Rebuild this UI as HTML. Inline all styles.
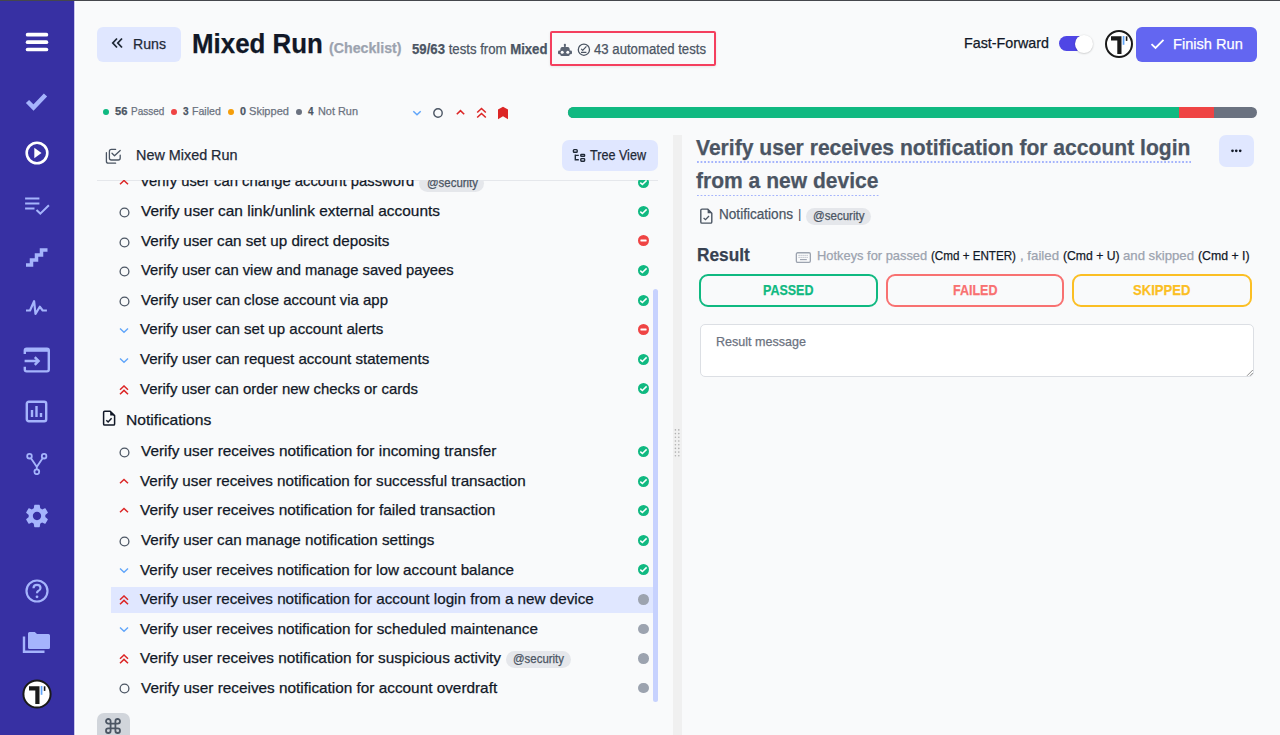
<!DOCTYPE html>
<html><head><meta charset="utf-8"><style>
html,body{margin:0;padding:0;}
body{width:1280px;height:735px;overflow:hidden;background:#f9fafb;position:relative;font-family:"Liberation Sans",sans-serif;}
.t{position:absolute;white-space:nowrap;transform-origin:0 0;-webkit-text-stroke:0.25px currentColor;}
</style></head><body>
<div style="position:absolute;left:0px;top:0.00px;width:74.00px;height:735.00px;background:#3730a3"></div>
<div style="position:absolute;left:74px;top:0.00px;width:1.00px;height:735.00px;background:#c9c6ea"></div>
<div style="position:absolute;left:75px;top:0.00px;width:1.30px;height:735.00px;background:#ffffff"></div>
<svg style="position:absolute;left:23.5px;top:31.50px;" width="26" height="20" viewBox="0 0 26 20"><rect x="1.75" y="0.85" width="22.5" height="3.7" rx="1.85" fill="#fff"/><rect x="1.75" y="8.3" width="22.5" height="3.7" rx="1.85" fill="#fff"/><rect x="1.75" y="15.65" width="22.5" height="3.7" rx="1.85" fill="#fff"/></svg>
<svg style="position:absolute;left:24.5px;top:92.20px;" width="24" height="19" viewBox="0 0 24 19"><path d="M2.5 9.5 L8.5 15.5 L20.5 3" fill="none" stroke="#a5b4fc" stroke-width="4.5"/></svg>
<svg style="position:absolute;left:24.5px;top:141.00px;" width="24" height="24" viewBox="0 0 24 24"><circle cx="12" cy="12" r="10.3" fill="none" stroke="#fff" stroke-width="2.6"/><path d="M9.3 6.8 L16.5 12 L9.3 17.2 Z" fill="#fff"/></svg>
<svg style="position:absolute;left:23.5px;top:195.50px;" width="26" height="19" viewBox="0 0 26 19"><path d="M1.1 2.5 H15.4 M1.1 7.4 H15.4 M1.1 12.5 H10.5" stroke="#a5b4fc" stroke-width="2"/><path d="M12.5 14 L16.3 17.6 L24.9 9.3" fill="none" stroke="#a5b4fc" stroke-width="2"/></svg>
<svg style="position:absolute;left:24.5px;top:247.00px;" width="24" height="20" viewBox="0 0 24 20"><path d="M1 18 H6.5 V13 H11.5 V8 H16.5 V3 H22.5" fill="none" stroke="#a5b4fc" stroke-width="3.5"/></svg>
<svg style="position:absolute;left:25.0px;top:300.00px;" width="23" height="16" viewBox="0 0 23 16"><path d="M1 10.5 H5 L9.1 1.2 L10.5 14 L14.8 6.7 L17.7 10.5 H21.9" fill="none" stroke="#a5b4fc" stroke-width="2.2" stroke-linejoin="round"/></svg>
<svg style="position:absolute;left:23.0px;top:347.00px;" width="27" height="26" viewBox="0 0 27 26"><path d="M1.8 7 V3.6 Q1.8 1.8 3.6 1.8 H24 Q25.8 1.8 25.8 3.6 V22.6 Q25.8 24.4 24 24.4 H3.6 Q1.8 24.4 1.8 22.6 V19.7" fill="none" stroke="#a5b4fc" stroke-width="2.4"/><rect x="1.8" y="1.8" width="24" height="3" fill="#a5b4fc"/><path d="M1.6 14 H15.5 M11.8 10.2 L15.6 14 L11.8 17.8" fill="none" stroke="#a5b4fc" stroke-width="2.4"/></svg>
<svg style="position:absolute;left:25.0px;top:400.00px;" width="23" height="23" viewBox="0 0 23 23"><rect x="1.8" y="1.8" width="19.4" height="19.4" rx="2" fill="none" stroke="#a5b4fc" stroke-width="2.4"/><path d="M7 17 V10 M11.5 17 V6 M16 17 V13" stroke="#a5b4fc" stroke-width="2.4"/></svg>
<svg style="position:absolute;left:25.5px;top:451.50px;" width="22" height="23" viewBox="0 0 22 23"><circle cx="3.5" cy="4.2" r="2.3" fill="none" stroke="#a5b4fc" stroke-width="1.8"/><circle cx="18.1" cy="4.2" r="2.3" fill="none" stroke="#a5b4fc" stroke-width="1.8"/><circle cx="10.8" cy="19.8" r="2.4" fill="none" stroke="#a5b4fc" stroke-width="1.8"/><path d="M4.8 6 L10.8 14.8 L16.8 6 M10.8 14.8 V17.4" fill="none" stroke="#a5b4fc" stroke-width="1.8"/></svg>
<svg style="position:absolute;left:22.5px;top:501.50px;" width="28" height="28" viewBox="0 0 28 28"><g transform="translate(0.08,0.08) scale(1.16)"><path d="M19.14 12.94c.04-.3.06-.61.06-.94 0-.32-.02-.64-.07-.94l2.03-1.58c.18-.14.23-.41.12-.61l-1.92-3.32c-.12-.22-.37-.29-.59-.22l-2.39.96c-.5-.38-1.03-.7-1.62-.94l-.36-2.54c-.04-.24-.24-.41-.48-.41h-3.84c-.24 0-.43.17-.47.41l-.36 2.54c-.59.24-1.13.57-1.62.94l-2.39-.96c-.22-.08-.47 0-.59.22L2.74 8.87c-.12.21-.08.47.12.61l2.03 1.58c-.05.3-.09.63-.09.94s.02.64.07.94l-2.03 1.58c-.18.14-.23.41-.12.61l1.92 3.32c.12.22.37.29.59.22l2.39-.96c.5.38 1.03.7 1.62.94l.36 2.54c.05.24.24.41.48.41h3.84c.24 0 .44-.17.47-.41l.36-2.54c.59-.24 1.130-.56 1.62-.94l2.39.96c.22.08.47 0 .59-.22l1.92-3.32c.12-.22.07-.47-.12-.61l-2.01-1.58zM12 15.6c-1.98 0-3.6-1.62-3.6-3.6s1.62-3.6 3.6-3.6 3.6 1.62 3.6 3.6-1.62 3.6-3.6 3.6z" fill="#a5b4fc"/></g></svg>
<svg style="position:absolute;left:24.5px;top:578.50px;" width="24" height="24" viewBox="0 0 24 24"><circle cx="12" cy="12" r="10.5" fill="none" stroke="#a5b4fc" stroke-width="2.2"/><path d="M8.5 9.2 Q8.5 5.8 12 5.8 Q15.5 5.8 15.5 9 Q15.5 11 13.2 12 Q12 12.6 12 14.3" fill="none" stroke="#a5b4fc" stroke-width="2.2"/><circle cx="12" cy="17.8" r="1.4" fill="#a5b4fc"/></svg>
<svg style="position:absolute;left:21.5px;top:631.00px;" width="30" height="23" viewBox="0 0 30 23"><path d="M2 5.5 V20.8 H22.5" fill="none" stroke="#a5b4fc" stroke-width="2.4"/><path d="M7.5 1 H12.8 L15 3 H26.5 Q28 3 28 4.5 V16.5 Q28 18 26.5 18 H7.5 Q6 18 6 16.5 V2.5 Q6 1 7.5 1 Z" fill="#a5b4fc"/></svg>
<svg style="position:absolute;left:21.200000000000003px;top:677.90px;" width="32" height="32" viewBox="0 0 32 32"><circle cx="16" cy="16" r="13.6" fill="#fff" stroke="#1a1a1a" stroke-width="2"/><path d="M8 8.2 H18.5 V25.9 H14.3 V12.5 H8 Z" fill="#1a1a1a"/><rect x="19.7" y="8" width="1.7" height="8.8" fill="#60a5fa"/><rect x="22.8" y="8.3" width="1.6" height="4.6" fill="#1a1a1a"/></svg>
<div style="position:absolute;left:97px;top:27.00px;width:84.00px;height:35.00px;background:#e0e7ff;border-radius:6px"></div>
<svg style="position:absolute;left:111px;top:37.00px;" width="13" height="12" viewBox="0 0 13 12"><path d="M6 1.5 L1.8 6 L6 10.5 M11 1.5 L6.8 6 L11 10.5" fill="none" stroke="#1f2937" stroke-width="1.8"/></svg>
<div class="t" style="left:133.3px;top:35.70px;font-size:15px;line-height:15px;font-weight:400;color:#1f2937;transform:scaleX(0.9420);">Runs</div>
<div class="t" style="left:192.2px;top:30.02px;font-size:27.5px;line-height:27.5px;font-weight:700;color:#111827;transform:scaleX(0.9408);">Mixed Run</div>
<div class="t" style="left:329.4px;top:39.90px;font-size:15px;line-height:15px;font-weight:700;color:#9ca3af;transform:scaleX(0.9454);">(Checklist)</div>
<div class="t" style="left:412.3px;top:41.75px;font-size:14px;line-height:14px;font-weight:400;color:#4b5563;transform:scaleX(0.9412);"><b>59/63</b> tests from <b>Mixed</b></div>
<div style="position:absolute;left:550px;top:31.00px;width:166.00px;height:34.50px;border:2.5px solid #f43f5e;border-radius:2px;box-sizing:border-box;box-shadow:0 1px 3px rgba(0,0,0,0.08)"></div>
<svg style="position:absolute;left:557px;top:43.00px;" width="16" height="14" viewBox="0 0 16 14"><rect x="6.9" y="0.7" width="2" height="3.4" rx="0.8" fill="#5b6473"/><path d="M5.2 3.9 H10.8 Q12.8 3.9 12.8 8 V11.6 Q12.8 12.9 11.5 12.9 H4.5 Q3.2 12.9 3.2 11.6 V8 Q3.2 3.9 5.2 3.9 Z" fill="#5b6473"/><rect x="1" y="7.6" width="3.2" height="3.6" rx="1.2" fill="#5b6473"/><rect x="11.8" y="7.6" width="3.2" height="3.6" rx="1.2" fill="#5b6473"/><circle cx="5.2" cy="9.2" r="1.5" fill="#fff"/><circle cx="10.8" cy="9.2" r="1.5" fill="#fff"/></svg>
<svg style="position:absolute;left:576.5px;top:43.00px;" width="14" height="14" viewBox="0 0 14 14"><circle cx="6.9" cy="6.7" r="5.6" fill="none" stroke="#4b5563" stroke-width="1.3"/><path d="M4.2 5.8 L5.7 7.4 L9.4 3.4 M4 9.3 H9.4" fill="none" stroke="#4b5563" stroke-width="1.2"/></svg>
<div class="t" style="left:594.0px;top:41.75px;font-size:14px;line-height:14px;font-weight:400;color:#4b5563;transform:scaleX(0.9406);">43 automated tests</div>
<div class="t" style="left:964.0px;top:35.00px;font-size:15px;line-height:15px;font-weight:400;color:#111827;transform:scaleX(0.9530);">Fast-Forward</div>
<div style="position:absolute;left:1058.7px;top:36.30px;width:27.30px;height:14.80px;background:#4f46e5;border-radius:8px"></div>
<div style="position:absolute;left:1075.3px;top:35.30px;width:17.80px;height:17.80px;background:#fff;border-radius:50%;box-shadow:0 0.5px 2px rgba(0,0,0,0.25)"></div>
<svg style="position:absolute;left:1103px;top:28.00px;" width="32" height="32" viewBox="0 0 32 32"><circle cx="16" cy="16" r="13" fill="#fff" stroke="#1a1a1a" stroke-width="2"/><path d="M8 8.2 H18.5 V25.9 H14.3 V12.5 H8 Z" fill="#1a1a1a"/><rect x="19.7" y="8" width="1.7" height="8.8" fill="#60a5fa"/><rect x="22.8" y="8.3" width="1.6" height="4.6" fill="#1a1a1a"/></svg>
<div style="position:absolute;left:1136px;top:27.00px;width:121.00px;height:35.00px;background:#6366f1;border-radius:6px"></div>
<svg style="position:absolute;left:1150px;top:38.00px;" width="15" height="12" viewBox="0 0 15 12"><path d="M1.5 6.2 L5.5 10 L13.5 1.8" fill="none" stroke="#fff" stroke-width="1.8"/></svg>
<div class="t" style="left:1172.7px;top:35.68px;font-size:15.5px;line-height:15.5px;font-weight:400;color:#ffffff;transform:scaleX(0.9420);">Finish Run</div>
<div style="position:absolute;left:103.1px;top:109.10px;width:5.80px;height:5.80px;background:#10b981;border-radius:50%"></div>
<div style="position:absolute;left:171.1px;top:109.10px;width:5.80px;height:5.80px;background:#ef4444;border-radius:50%"></div>
<div style="position:absolute;left:228.1px;top:109.10px;width:5.80px;height:5.80px;background:#f59e0b;border-radius:50%"></div>
<div style="position:absolute;left:295.90000000000003px;top:109.10px;width:5.80px;height:5.80px;background:#6b7280;border-radius:50%"></div>
<div class="t" style="left:115.0px;top:106.47px;font-size:11.5px;line-height:11.5px;font-weight:700;color:#4b5563;transform:scaleX(0.9690);">56</div>
<div class="t" style="left:130.7px;top:106.47px;font-size:11.5px;line-height:11.5px;font-weight:400;color:#6b7280;transform:scaleX(0.8681);">Passed</div>
<div class="t" style="left:183.0px;top:106.47px;font-size:11.5px;line-height:11.5px;font-weight:700;color:#4b5563;transform:scaleX(0.8741);">3</div>
<div class="t" style="left:192.0px;top:106.47px;font-size:11.5px;line-height:11.5px;font-weight:400;color:#6b7280;transform:scaleX(0.9193);">Failed</div>
<div class="t" style="left:240.0px;top:106.47px;font-size:11.5px;line-height:11.5px;font-weight:700;color:#4b5563;transform:scaleX(0.9366);">0</div>
<div class="t" style="left:249.0px;top:106.47px;font-size:11.5px;line-height:11.5px;font-weight:400;color:#6b7280;transform:scaleX(0.9624);">Skipped</div>
<div class="t" style="left:308.3px;top:106.47px;font-size:11.5px;line-height:11.5px;font-weight:700;color:#4b5563;transform:scaleX(0.8585);">4</div>
<div class="t" style="left:317.5px;top:106.47px;font-size:11.5px;line-height:11.5px;font-weight:400;color:#6b7280;transform:scaleX(0.9481);">Not Run</div>
<svg style="position:absolute;left:411px;top:108.00px;" width="12" height="9" viewBox="0 0 12 9"><path d="M2.3 3.2 L6 6.8 L9.7 3.2" fill="none" stroke="#60a5fa" stroke-width="1.5"/></svg>
<svg style="position:absolute;left:432px;top:107.40px;" width="12" height="12" viewBox="0 0 12 12"><circle cx="6" cy="6" r="4.2" fill="none" stroke="#4b5563" stroke-width="1.4"/></svg>
<svg style="position:absolute;left:454.5px;top:108.00px;" width="11" height="9" viewBox="0 0 11 9"><path d="M1.8 6.3 L5.5 2.7 L9.2 6.3" fill="none" stroke="#dc2626" stroke-width="1.6"/></svg>
<svg style="position:absolute;left:476px;top:106.50px;" width="11" height="12" viewBox="0 0 11 12"><path d="M1.2 5.5 L5.5 1.5 L9.8 5.5 M1.2 10.5 L5.5 6.5 L9.8 10.5" fill="none" stroke="#dc2626" stroke-width="1.6"/></svg>
<svg style="position:absolute;left:496.5px;top:106.00px;" width="12" height="14" viewBox="0 0 12 14"><path d="M1 3.5 L6 0.8 L11 3.5 L11 13.2 L6 10.2 L1 13.2 Z" fill="#dc2626"/></svg>
<div style="position:absolute;left:568px;top:107.00px;width:689.00px;height:11.00px;background:#6b7280;border-radius:6px;overflow:hidden"></div>
<div style="position:absolute;left:568px;top:107.00px;width:611.00px;height:11.00px;background:#10b981;border-radius:6px 0 0 6px"></div>
<div style="position:absolute;left:1179px;top:107.00px;width:35.00px;height:11.00px;background:#ef4444"></div>
<svg style="position:absolute;left:100px;top:143.00px;" width="26" height="26" viewBox="0 0 26 26"><g fill="none" stroke="#4b5563" stroke-width="1.3" stroke-linecap="round" stroke-linejoin="round"><path d="M15.6 6.4 H11.4 Q9.4 6.4 9.4 8.4 V15 Q9.4 17 11.4 17 H18.2 Q20.2 17 20.2 15 V12.2"/><path d="M12 10.3 L14.5 12.7 L20.2 7.4"/><path d="M6.4 9.7 V18.2 Q6.4 20.2 8.4 20.2 H15.6"/></g></svg>
<div class="t" style="left:136.0px;top:146.80px;font-size:15px;line-height:15px;font-weight:400;color:#1f2937;transform:scaleX(0.9587);">New Mixed Run</div>
<div style="position:absolute;left:561.5px;top:140.00px;width:96.30px;height:31.00px;background:#e0e7ff;border-radius:7px"></div>
<svg style="position:absolute;left:568px;top:144.00px;" width="24" height="24" viewBox="0 0 24 24"><g fill="none" stroke="#1f2937" stroke-width="1.4"><rect x="5.4" y="5.6" width="3.8" height="2.6" rx="0.8"/><path d="M7.3 10.5 V15.7 H10.8 M7.3 11.4 H10.8"/><rect x="12.8" y="10.4" width="3.8" height="1.9" rx="0.6"/><rect x="12.8" y="14.6" width="3.8" height="2.6" rx="0.6"/></g></svg>
<div class="t" style="left:590.0px;top:148.05px;font-size:14px;line-height:14px;font-weight:400;color:#1f2937;transform:scaleX(0.8996);">Tree View</div>
<div style="position:absolute;left:97px;top:179.50px;width:561.00px;height:1.00px;background:#e5e7eb"></div>
<div style="position:absolute;left:0;top:180px;width:673px;height:555px;overflow:hidden">
<div style="position:absolute;left:111px;top:407.00px;width:542.00px;height:26.00px;background:#e0e7ff"></div>
<svg style="position:absolute;left:119px;top:-1.50px;" width="10" height="7" viewBox="0 0 10 7"><path d="M1 5.3 L5 1.5 L9 5.3" fill="none" stroke="#dc2626" stroke-width="1.5"/></svg>
<div class="t" style="left:140.0px;top:-6.70px;font-size:15px;line-height:15px;font-weight:400;color:#111827;transform:scaleX(0.9875);">Verify user can change account password</div>
<div style="position:absolute;left:419px;top:-4.70px;width:65.00px;height:16.90px;background:#e5e7eb;border-radius:8.5px"></div>
<div class="t" style="left:426.6px;top:-2.88px;font-size:12.5px;line-height:12.5px;font-weight:400;color:#4b5563;transform:scaleX(0.9145);">@security</div>
<svg style="position:absolute;left:637.8px;top:-3.50px;" width="11" height="11" viewBox="0 0 11 11"><circle cx="5.5" cy="5.5" r="5.5" fill="#10b981"/><path d="M2.3 5.6 L4.4 7.5 L8.6 3.4" fill="none" stroke="#fff" stroke-width="1.5"/></svg>
<svg style="position:absolute;left:119px;top:27.20px;" width="11" height="11" viewBox="0 0 11 11"><circle cx="5.5" cy="5.5" r="4.4" fill="none" stroke="#4b5563" stroke-width="1.3"/></svg>
<div class="t" style="left:141.0px;top:22.90px;font-size:15px;line-height:15px;font-weight:400;color:#111827;transform:scaleX(1.0275);">Verify user can link/unlink external accounts</div>
<svg style="position:absolute;left:637.8px;top:26.00px;" width="11" height="11" viewBox="0 0 11 11"><circle cx="5.5" cy="5.5" r="5.5" fill="#10b981"/><path d="M2.3 5.6 L4.4 7.5 L8.6 3.4" fill="none" stroke="#fff" stroke-width="1.5"/></svg>
<svg style="position:absolute;left:119px;top:56.70px;" width="11" height="11" viewBox="0 0 11 11"><circle cx="5.5" cy="5.5" r="4.4" fill="none" stroke="#4b5563" stroke-width="1.3"/></svg>
<div class="t" style="left:141.0px;top:52.50px;font-size:15px;line-height:15px;font-weight:400;color:#111827;transform:scaleX(1.0133);">Verify user can set up direct deposits</div>
<svg style="position:absolute;left:637.8px;top:55.00px;" width="11" height="11" viewBox="0 0 11 11"><circle cx="5.5" cy="5.5" r="5.5" fill="#ef4444"/><rect x="2.4" y="4.5" width="6.2" height="1.9" rx="0.4" fill="#fff"/></svg>
<svg style="position:absolute;left:119px;top:86.20px;" width="11" height="11" viewBox="0 0 11 11"><circle cx="5.5" cy="5.5" r="4.4" fill="none" stroke="#4b5563" stroke-width="1.3"/></svg>
<div class="t" style="left:141.0px;top:82.10px;font-size:15px;line-height:15px;font-weight:400;color:#111827;transform:scaleX(0.9839);">Verify user can view and manage saved payees</div>
<svg style="position:absolute;left:637.8px;top:85.00px;" width="11" height="11" viewBox="0 0 11 11"><circle cx="5.5" cy="5.5" r="5.5" fill="#10b981"/><path d="M2.3 5.6 L4.4 7.5 L8.6 3.4" fill="none" stroke="#fff" stroke-width="1.5"/></svg>
<svg style="position:absolute;left:119px;top:115.70px;" width="11" height="11" viewBox="0 0 11 11"><circle cx="5.5" cy="5.5" r="4.4" fill="none" stroke="#4b5563" stroke-width="1.3"/></svg>
<div class="t" style="left:141.0px;top:111.70px;font-size:15px;line-height:15px;font-weight:400;color:#111827;transform:scaleX(0.9974);">Verify user can close account via app</div>
<svg style="position:absolute;left:637.8px;top:114.50px;" width="11" height="11" viewBox="0 0 11 11"><circle cx="5.5" cy="5.5" r="5.5" fill="#10b981"/><path d="M2.3 5.6 L4.4 7.5 L8.6 3.4" fill="none" stroke="#fff" stroke-width="1.5"/></svg>
<svg style="position:absolute;left:119px;top:147.00px;" width="10" height="7" viewBox="0 0 10 7"><path d="M1 1.5 L5 5.3 L9 1.5" fill="none" stroke="#60a5fa" stroke-width="1.4"/></svg>
<div class="t" style="left:140.0px;top:141.30px;font-size:15px;line-height:15px;font-weight:400;color:#111827;transform:scaleX(1.0062);">Verify user can set up account alerts</div>
<svg style="position:absolute;left:637.8px;top:143.50px;" width="11" height="11" viewBox="0 0 11 11"><circle cx="5.5" cy="5.5" r="5.5" fill="#ef4444"/><rect x="2.4" y="4.5" width="6.2" height="1.9" rx="0.4" fill="#fff"/></svg>
<svg style="position:absolute;left:119px;top:176.50px;" width="10" height="7" viewBox="0 0 10 7"><path d="M1 1.5 L5 5.3 L9 1.5" fill="none" stroke="#60a5fa" stroke-width="1.4"/></svg>
<div class="t" style="left:140.0px;top:170.90px;font-size:15px;line-height:15px;font-weight:400;color:#111827;transform:scaleX(1.0054);">Verify user can request account statements</div>
<svg style="position:absolute;left:637.8px;top:173.50px;" width="11" height="11" viewBox="0 0 11 11"><circle cx="5.5" cy="5.5" r="5.5" fill="#10b981"/><path d="M2.3 5.6 L4.4 7.5 L8.6 3.4" fill="none" stroke="#fff" stroke-width="1.5"/></svg>
<svg style="position:absolute;left:119px;top:204.50px;" width="10" height="10" viewBox="0 0 10 10"><path d="M1 4.8 L5 1 L9 4.8 M1 9.2 L5 5.4 L9 9.2" fill="none" stroke="#dc2626" stroke-width="1.5"/></svg>
<div class="t" style="left:140.0px;top:200.50px;font-size:15px;line-height:15px;font-weight:400;color:#111827;transform:scaleX(0.9954);">Verify user can order new checks or cards</div>
<svg style="position:absolute;left:637.8px;top:203.00px;" width="11" height="11" viewBox="0 0 11 11"><circle cx="5.5" cy="5.5" r="5.5" fill="#10b981"/><path d="M2.3 5.6 L4.4 7.5 L8.6 3.4" fill="none" stroke="#fff" stroke-width="1.5"/></svg>
<svg style="position:absolute;left:119px;top:267.20px;" width="11" height="11" viewBox="0 0 11 11"><circle cx="5.5" cy="5.5" r="4.4" fill="none" stroke="#4b5563" stroke-width="1.3"/></svg>
<div class="t" style="left:141.0px;top:263.20px;font-size:15px;line-height:15px;font-weight:400;color:#111827;transform:scaleX(1.0220);">Verify user receives notification for incoming transfer</div>
<svg style="position:absolute;left:637.8px;top:266.00px;" width="11" height="11" viewBox="0 0 11 11"><circle cx="5.5" cy="5.5" r="5.5" fill="#10b981"/><path d="M2.3 5.6 L4.4 7.5 L8.6 3.4" fill="none" stroke="#fff" stroke-width="1.5"/></svg>
<svg style="position:absolute;left:119px;top:297.50px;" width="10" height="7" viewBox="0 0 10 7"><path d="M1 5.3 L5 1.5 L9 5.3" fill="none" stroke="#dc2626" stroke-width="1.5"/></svg>
<div class="t" style="left:140.0px;top:292.80px;font-size:15px;line-height:15px;font-weight:400;color:#111827;transform:scaleX(1.0148);">Verify user receives notification for successful transaction</div>
<svg style="position:absolute;left:637.8px;top:295.50px;" width="11" height="11" viewBox="0 0 11 11"><circle cx="5.5" cy="5.5" r="5.5" fill="#10b981"/><path d="M2.3 5.6 L4.4 7.5 L8.6 3.4" fill="none" stroke="#fff" stroke-width="1.5"/></svg>
<svg style="position:absolute;left:119px;top:327.00px;" width="10" height="7" viewBox="0 0 10 7"><path d="M1 5.3 L5 1.5 L9 5.3" fill="none" stroke="#dc2626" stroke-width="1.5"/></svg>
<div class="t" style="left:140.0px;top:322.40px;font-size:15px;line-height:15px;font-weight:400;color:#111827;transform:scaleX(1.0271);">Verify user receives notification for failed transaction</div>
<svg style="position:absolute;left:637.8px;top:325.00px;" width="11" height="11" viewBox="0 0 11 11"><circle cx="5.5" cy="5.5" r="5.5" fill="#10b981"/><path d="M2.3 5.6 L4.4 7.5 L8.6 3.4" fill="none" stroke="#fff" stroke-width="1.5"/></svg>
<svg style="position:absolute;left:119px;top:355.70px;" width="11" height="11" viewBox="0 0 11 11"><circle cx="5.5" cy="5.5" r="4.4" fill="none" stroke="#4b5563" stroke-width="1.3"/></svg>
<div class="t" style="left:141.0px;top:352.00px;font-size:15px;line-height:15px;font-weight:400;color:#111827;transform:scaleX(1.0140);">Verify user can manage notification settings</div>
<svg style="position:absolute;left:637.8px;top:354.50px;" width="11" height="11" viewBox="0 0 11 11"><circle cx="5.5" cy="5.5" r="5.5" fill="#10b981"/><path d="M2.3 5.6 L4.4 7.5 L8.6 3.4" fill="none" stroke="#fff" stroke-width="1.5"/></svg>
<svg style="position:absolute;left:119px;top:387.00px;" width="10" height="7" viewBox="0 0 10 7"><path d="M1 1.5 L5 5.3 L9 1.5" fill="none" stroke="#60a5fa" stroke-width="1.4"/></svg>
<div class="t" style="left:140.0px;top:381.60px;font-size:15px;line-height:15px;font-weight:400;color:#111827;transform:scaleX(1.0148);">Verify user receives notification for low account balance</div>
<svg style="position:absolute;left:637.8px;top:384.00px;" width="11" height="11" viewBox="0 0 11 11"><circle cx="5.5" cy="5.5" r="5.5" fill="#10b981"/><path d="M2.3 5.6 L4.4 7.5 L8.6 3.4" fill="none" stroke="#fff" stroke-width="1.5"/></svg>
<svg style="position:absolute;left:119px;top:415.00px;" width="10" height="10" viewBox="0 0 10 10"><path d="M1 4.8 L5 1 L9 4.8 M1 9.2 L5 5.4 L9 9.2" fill="none" stroke="#dc2626" stroke-width="1.5"/></svg>
<div class="t" style="left:140.0px;top:411.20px;font-size:15px;line-height:15px;font-weight:400;color:#111827;transform:scaleX(1.0155);">Verify user receives notification for account login from a new device</div>
<div style="position:absolute;left:638px;top:414.30px;width:10.50px;height:10.50px;background:#9ca3af;border-radius:50%"></div>
<svg style="position:absolute;left:119px;top:446.00px;" width="10" height="7" viewBox="0 0 10 7"><path d="M1 1.5 L5 5.3 L9 1.5" fill="none" stroke="#60a5fa" stroke-width="1.4"/></svg>
<div class="t" style="left:140.0px;top:440.80px;font-size:15px;line-height:15px;font-weight:400;color:#111827;transform:scaleX(1.0177);">Verify user receives notification for scheduled maintenance</div>
<div style="position:absolute;left:638px;top:443.80px;width:10.50px;height:10.50px;background:#9ca3af;border-radius:50%"></div>
<svg style="position:absolute;left:119px;top:474.00px;" width="10" height="10" viewBox="0 0 10 10"><path d="M1 4.8 L5 1 L9 4.8 M1 9.2 L5 5.4 L9 9.2" fill="none" stroke="#dc2626" stroke-width="1.5"/></svg>
<div class="t" style="left:140.0px;top:470.40px;font-size:15px;line-height:15px;font-weight:400;color:#111827;transform:scaleX(1.0237);">Verify user receives notification for suspicious activity</div>
<div style="position:absolute;left:505.7px;top:471.30px;width:65.10px;height:16.90px;background:#e5e7eb;border-radius:8.5px"></div>
<div class="t" style="left:513.3px;top:473.12px;font-size:12.5px;line-height:12.5px;font-weight:400;color:#4b5563;transform:scaleX(0.9145);">@security</div>
<div style="position:absolute;left:638px;top:473.30px;width:10.50px;height:10.50px;background:#9ca3af;border-radius:50%"></div>
<svg style="position:absolute;left:119px;top:503.20px;" width="11" height="11" viewBox="0 0 11 11"><circle cx="5.5" cy="5.5" r="4.4" fill="none" stroke="#4b5563" stroke-width="1.3"/></svg>
<div class="t" style="left:141.0px;top:500.00px;font-size:15px;line-height:15px;font-weight:400;color:#111827;transform:scaleX(1.0220);">Verify user receives notification for account overdraft</div>
<div style="position:absolute;left:638px;top:502.80px;width:10.50px;height:10.50px;background:#9ca3af;border-radius:50%"></div>
<svg style="position:absolute;left:102.2px;top:230.30px;" width="14" height="16" viewBox="0 0 14 16"><path d="M1.6 2.4 Q1.6 1.3 2.7 1.3 H8.2 L12.6 5.6 V13.9 Q12.6 15 11.5 15 H2.7 Q1.6 15 1.6 13.9 Z" fill="none" stroke="#111827" stroke-width="1.5" stroke-linejoin="round"/><path d="M8.2 1.3 V5.6 H12.6 Z" fill="#111827"/><path d="M4.3 10.3 L6.1 12 L9.6 8.3" fill="none" stroke="#111827" stroke-width="1.5"/></svg>
<div class="t" style="left:126.4px;top:232.00px;font-size:15px;line-height:15px;font-weight:400;color:#111827;transform:scaleX(1.0440);">Notifications</div>
<div style="position:absolute;left:653px;top:109.00px;width:5.00px;height:412.50px;background:#c7d2fe;border-radius:3px"></div>
</div>
<div style="position:absolute;left:97px;top:712.70px;width:33.00px;height:32.30px;background:#d1d5db;border-radius:7px"></div>
<svg style="position:absolute;left:104.2px;top:716.80px;" width="18" height="18" viewBox="0 0 18 18"><path d="M6.6 6.6 H11.4 V11.4 H6.6 Z M4.3 6.6 A2.3 2.3 0 1 1 6.6 4.3 V6.6 Z M11.4 4.3 A2.3 2.3 0 1 1 13.7 6.6 H11.4 Z M13.7 11.4 A2.3 2.3 0 1 1 11.4 13.7 V11.4 Z M6.6 13.7 A2.3 2.3 0 1 1 4.3 11.4 H6.6 Z" fill="none" stroke="#4b5563" stroke-width="1.8" stroke-linejoin="round"/></svg>
<div style="position:absolute;left:673px;top:135.00px;width:8.50px;height:600.00px;background:#f0f0f0"></div>
<svg style="position:absolute;left:672px;top:426.00px;" width="10" height="34" viewBox="0 0 10 34"><circle cx="3.4" cy="3.90" r="0.8" fill="#b0b0b0"/><circle cx="6.8" cy="3.90" r="0.8" fill="#b0b0b0"/><circle cx="3.4" cy="7.60" r="0.8" fill="#b0b0b0"/><circle cx="6.8" cy="7.60" r="0.8" fill="#b0b0b0"/><circle cx="3.4" cy="11.30" r="0.8" fill="#b0b0b0"/><circle cx="6.8" cy="11.30" r="0.8" fill="#b0b0b0"/><circle cx="3.4" cy="15.00" r="0.8" fill="#b0b0b0"/><circle cx="6.8" cy="15.00" r="0.8" fill="#b0b0b0"/><circle cx="3.4" cy="18.70" r="0.8" fill="#b0b0b0"/><circle cx="6.8" cy="18.70" r="0.8" fill="#b0b0b0"/><circle cx="3.4" cy="22.40" r="0.8" fill="#b0b0b0"/><circle cx="6.8" cy="22.40" r="0.8" fill="#b0b0b0"/><circle cx="3.4" cy="26.10" r="0.8" fill="#b0b0b0"/><circle cx="6.8" cy="26.10" r="0.8" fill="#b0b0b0"/><circle cx="3.4" cy="29.80" r="0.8" fill="#b0b0b0"/><circle cx="6.8" cy="29.80" r="0.8" fill="#b0b0b0"/></svg>
<div style="position:absolute;left:696.6px;top:161.00px;width:494.40px;height:1.60px;background-image:linear-gradient(to right,#a5b4fc 55%,transparent 55%);background-size:3.6px 1.6px;background-repeat:repeat-x"></div>
<div style="position:absolute;left:696.6px;top:194.50px;width:182.40px;height:1.60px;background-image:linear-gradient(to right,#a5b4fc 55%,transparent 55%);background-size:3.6px 1.6px;background-repeat:repeat-x"></div>
<div class="t" style="left:696.2px;top:138.40px;font-size:21.5px;line-height:21.5px;font-weight:700;color:#4b5563;transform:scaleX(0.9806);">Verify user receives notification for account login</div>
<div class="t" style="left:696.2px;top:171.10px;font-size:21.5px;line-height:21.5px;font-weight:700;color:#4b5563;transform:scaleX(0.9785);">from a new device</div>
<div style="position:absolute;left:1219px;top:135.20px;width:35.00px;height:31.80px;background:#e0e7ff;border-radius:7px"></div>
<svg style="position:absolute;left:1228px;top:146.00px;" width="16" height="10" viewBox="0 0 16 10"><circle cx="4.5" cy="4.8" r="1.35" fill="#111827"/><circle cx="8.25" cy="4.8" r="1.35" fill="#111827"/><circle cx="12.2" cy="4.8" r="1.35" fill="#111827"/></svg>
<svg style="position:absolute;left:698.5px;top:207.80px;" width="15" height="16" viewBox="0 0 15 16"><path d="M1.8 2.3 Q1.8 1.1 3 1.1 H8.6 L12.8 5.3 V13.9 Q12.8 15.1 11.6 15.1 H3 Q1.8 15.1 1.8 13.9 Z" fill="none" stroke="#4b5563" stroke-width="1.4" stroke-linejoin="round"/><path d="M8.6 1.1 V5.3 H12.8 Z" fill="#4b5563"/><path d="M4.6 10 L6.5 11.7 L10 8" fill="none" stroke="#4b5563" stroke-width="1.3"/></svg>
<div class="t" style="left:719.0px;top:207.35px;font-size:14px;line-height:14px;font-weight:400;color:#4b5563;transform:scaleX(0.9703);">Notifications</div>
<div class="t" style="left:798.0px;top:206.80px;font-size:13px;line-height:13px;font-weight:400;color:#4b5563;-webkit-text-stroke:0">|</div>
<div style="position:absolute;left:805.7px;top:207.80px;width:65.30px;height:16.90px;background:#e5e7eb;border-radius:8.5px"></div>
<div class="t" style="left:812.8px;top:209.72px;font-size:12.5px;line-height:12.5px;font-weight:400;color:#4b5563;transform:scaleX(0.9235);">@security</div>
<div class="t" style="left:697.0px;top:244.72px;font-size:19px;line-height:19px;font-weight:700;color:#374151;transform:scaleX(0.9091);">Result</div>
<svg style="position:absolute;left:794.5px;top:251.50px;" width="17" height="11" viewBox="0 0 17 11"><rect x="1.35" y="0.75" width="14" height="9.6" rx="1.3" fill="none" stroke="#9ca3af" stroke-width="1.3"/><path d="M3.6 3.4 H13.2 M3.6 5.4 H13.2" stroke="#9ca3af" stroke-width="0.9" stroke-dasharray="1 1"/><path d="M5 7.6 H11.8" stroke="#9ca3af" stroke-width="1.1"/></svg>
<div class="t" style="left:816.5px;top:249.37px;font-size:13.5px;line-height:13.5px;font-weight:400;color:#9ca3af;transform:scaleX(0.9536);">Hotkeys for passed</div>
<div class="t" style="left:930.6px;top:249.37px;font-size:13.5px;line-height:13.5px;font-weight:400;color:#111827;transform:scaleX(0.8617);">(Cmd + ENTER)</div>
<div class="t" style="left:1019.6px;top:249.37px;font-size:13.5px;line-height:13.5px;font-weight:400;color:#9ca3af;transform:scaleX(0.9804);">, failed</div>
<div class="t" style="left:1062.6px;top:249.37px;font-size:13.5px;line-height:13.5px;font-weight:400;color:#111827;transform:scaleX(0.9036);">(Cmd + U)</div>
<div class="t" style="left:1123.0px;top:249.37px;font-size:13.5px;line-height:13.5px;font-weight:400;color:#9ca3af;transform:scaleX(0.9751);">and skipped</div>
<div class="t" style="left:1198.4px;top:249.37px;font-size:13.5px;line-height:13.5px;font-weight:400;color:#111827;transform:scaleX(0.9110);">(Cmd + I)</div>
<div style="position:absolute;left:698.5px;top:273.80px;width:179.50px;height:33.00px;border:2px solid #10b981;border-radius:9px;box-sizing:border-box"></div>
<div class="t" style="left:763.3px;top:282.10px;font-size:15px;line-height:15px;font-weight:700;color:#10b981;transform:scaleX(0.8336);">PASSED</div>
<div style="position:absolute;left:885.8px;top:273.80px;width:178.40px;height:33.00px;border:2px solid #f87171;border-radius:9px;box-sizing:border-box"></div>
<div class="t" style="left:953.3px;top:282.10px;font-size:15px;line-height:15px;font-weight:700;color:#f87171;transform:scaleX(0.8342);">FAILED</div>
<div style="position:absolute;left:1072px;top:273.80px;width:179.50px;height:33.00px;border:2px solid #fbbf24;border-radius:9px;box-sizing:border-box"></div>
<div class="t" style="left:1133.3px;top:282.10px;font-size:15px;line-height:15px;font-weight:700;color:#fbbf24;transform:scaleX(0.8731);">SKIPPED</div>
<div style="position:absolute;left:700px;top:324.00px;width:554.00px;height:53.00px;background:#fff;border:1px solid #dcdfe4;border-radius:5px;box-sizing:border-box"></div>
<svg style="position:absolute;left:1246px;top:369.00px;" width="8" height="8" viewBox="0 0 8 8"><path d="M6.8 1 L1 6.8 M6.8 4 L4 6.8" stroke="#808080" stroke-width="0.9"/></svg>
<div class="t" style="left:716.0px;top:334.67px;font-size:13.5px;line-height:13.5px;font-weight:400;color:#6b7280;transform:scaleX(0.9298);">Result message</div>
<div style="position:absolute;left:0px;top:0.00px;width:1280.00px;height:1.00px;background:#45474d"></div>
</body></html>
